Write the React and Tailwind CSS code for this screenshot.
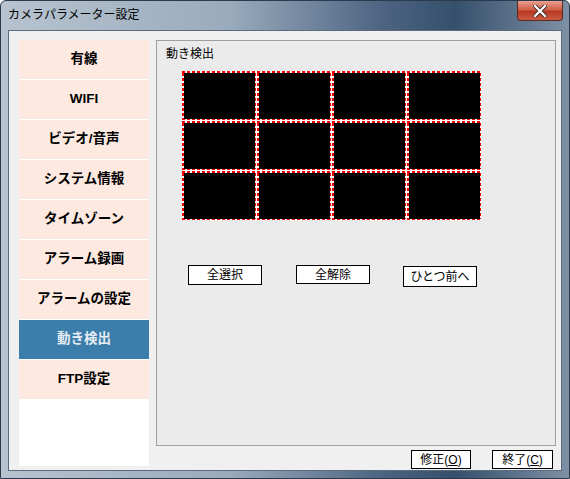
import React from "react";

const menu = [
  "有線",
  "WIFI",
  "ビデオ/音声",
  "システム情報",
  "タイムゾーン",
  "アラーム録画",
  "アラームの設定",
  "動き検出",
  "FTP設定",
];

const font = "font-['Liberation_Sans','Noto_Sans_CJK_JP',sans-serif]";

const CloseButton = () => (
  <div className="mr-[6px] w-[46px] h-[20px] rounded-b-[4px] border border-t-0 border-[#5a2a22] bg-[linear-gradient(180deg,#e8a090_0%,#d0604a_45%,#b83a24_55%,#c85a40_100%)] flex items-center justify-center">
    <svg width="14" height="12" viewBox="0 0 14 12">
      <path d="M2 1 L12 11 M12 1 L2 11" stroke="#3a2a2a" strokeWidth="4" strokeLinecap="square" />
      <path d="M2 1 L12 11 M12 1 L2 11" stroke="#ffffff" strokeWidth="2.2" strokeLinecap="square" />
    </svg>
  </div>
);

const hDash = "h-[1.5px] bg-[repeating-linear-gradient(90deg,#f00000_0_3px,#ffffff_3px_5px)]";
const vDash = "w-[1.5px] bg-[repeating-linear-gradient(180deg,#f00000_0_3px,#ffffff_3px_5px)]";

// one zone of the motion grid: black area inside a red/white dashed frame
const Cell = () => (
  <div className="h-[49px] flex flex-col">
    <div className={hDash} />
    <div className="flex-1 flex">
      <div className={vDash} />
      <div className="flex-1 bg-black" />
      <div className={vDash} />
    </div>
    <div className={hDash} />
  </div>
);

const SmallButton = ({ children, className = "" }) => (
  <button className={`w-[74px] bg-white border border-black text-[12px] text-black leading-none flex items-center justify-center ${className}`}>
    {children}
  </button>
);

export default function App() {
  return (
    <div className={`w-[570px] h-[479px] flex flex-col rounded-t-[6px] border border-[#2b3a4c] bg-[linear-gradient(90deg,#b7c3cf_0%,#9aabbd_40%,#4a6280_68%,#36506c_80%,#7d90a5_100%)] ${font}`}>
      {/* title bar */}
      <div className="h-[29px] flex items-start justify-between">
        <div className="pl-[7px] pt-[7px] text-[12px] text-black leading-[14px]">カメラパラメーター設定</div>
        <CloseButton />
      </div>

      {/* client */}
      <div className="mx-[7px] mb-[7px] flex-1 border border-[#5b6b7d] bg-[#f0f0f0] flex pl-[10px] pt-[9px]">
        <div className="w-[130px] h-[426px] bg-white flex flex-col">
          {menu.map((m) => {
            const active = m === "動き検出";
            return (
              <div
                key={m}
                className={`h-[40px] flex items-center justify-center text-[13.5px] font-bold border-b border-white ${
                  active ? "bg-[#3b7dab] text-[#e6edf3]" : "bg-[#fde9e0] text-black"
                }`}
              >
                {m}
              </div>
            );
          })}
        </div>

        <div className="ml-[7px] w-[400px] flex flex-col">
          <div className="h-[406px] border border-[#a0a0a0] bg-[#ebebeb] pl-[9px] pt-[6px]">
            <div className="text-[12px] text-black leading-[14px]">動き検出</div>
            <div className="ml-[16px] mt-[10px] w-[299px] grid grid-cols-4 gap-px bg-white">
              {Array.from({ length: 12 }).map((_, i) => (
                <Cell key={i} />
              ))}
            </div>
            <div className="flex items-start mt-[45px] ml-[22px]">
              <SmallButton className="h-[20px]">全選択</SmallButton>
              <SmallButton className="h-[19px] ml-[34px]">全解除</SmallButton>
              <SmallButton className="h-[21px] ml-[33px] mt-px">ひとつ前へ</SmallButton>
            </div>
          </div>
          <div className="flex justify-end mt-[4px] mr-[3px]">
            <button className="w-[60px] h-[19px] bg-white border border-black text-[12px] leading-none text-black">
              修正(<span className="underline">O</span>)
            </button>
            <button className="w-[61px] h-[19px] ml-[21px] bg-white border border-black text-[12px] leading-none text-black">
              終了(<span className="underline">C</span>)
            </button>
          </div>
        </div>
      </div>
    </div>
  );
}
